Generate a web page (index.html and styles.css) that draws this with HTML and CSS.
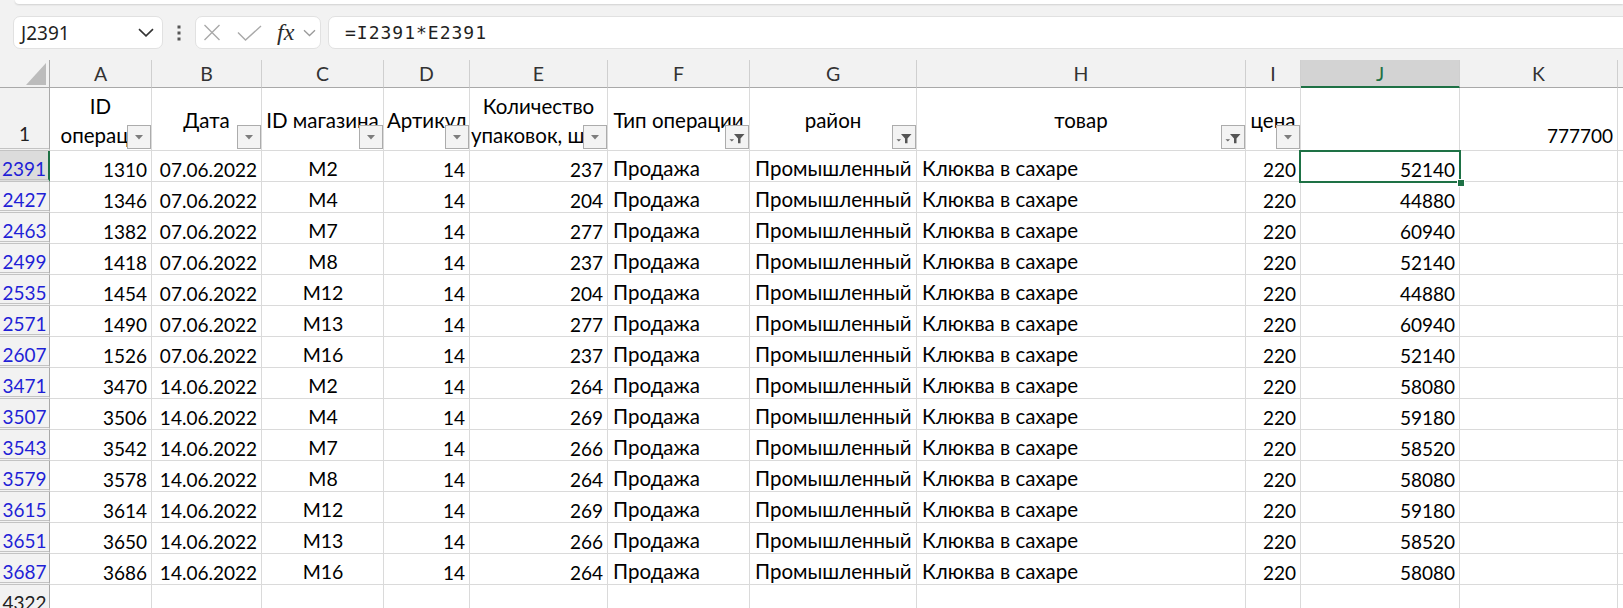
FILE: index.html
```html
<!DOCTYPE html>
<html lang="ru">
<head>
<meta charset="utf-8">
<title>Excel</title>
<link rel="stylesheet" href="styles.css">
</head>
<body>
<div class="top">
  <div class="ribbon-edge"></div>
  <div class="fbar">
    <div class="namebox">
      <span>J2391</span>
      <svg width="16" height="9" viewBox="0 0 16 9"><path d="M1 1.2l7 6.6 7-6.6" stroke="#333" stroke-width="1.6" fill="none"/></svg>
    </div>
    <div class="vdots">
      <svg width="4" height="16" viewBox="0 0 4 16"><rect x="0.5" y="0.5" width="3" height="3" fill="#555"/><rect x="0.5" y="6.5" width="3" height="3" fill="#555"/><rect x="0.5" y="12.5" width="3" height="3" fill="#555"/></svg>
    </div>
    <div class="fxbox">
      <svg class="ic-x" width="18" height="17" viewBox="0 0 18 17"><path d="M1.5 1l15 15M16.5 1l-15 15" stroke="#a9a9a9" stroke-width="1.4" fill="none"/></svg>
      <svg class="ic-ok" width="25" height="16" viewBox="0 0 25 16"><path d="M1 7.5l7.5 7.5L24 1" stroke="#a9a9a9" stroke-width="1.4" fill="none"/></svg>
      <span class="fx">fx</span>
      <svg class="ic-dd" width="13" height="8" viewBox="0 0 13 8"><path d="M1 1.2l5.5 5.3 5.5-5.3" stroke="#9a9a9a" stroke-width="1.3" fill="none"/></svg>
    </div>
    <div class="formula">=I2391*E2391</div>
  </div>
</div>

<div class="sheet">
  <!-- column headers -->
  <div class="corner"><svg width="20" height="22" viewBox="0 0 20 22"><path d="M20 0V22H0z" fill="#bcbcbc"/></svg></div>
  <div class="ch">A</div>
  <div class="ch">B</div>
  <div class="ch">C</div>
  <div class="ch">D</div>
  <div class="ch">E</div>
  <div class="ch">F</div>
  <div class="ch">G</div>
  <div class="ch">H</div>
  <div class="ch">I</div>
  <div class="ch sel">J</div>
  <div class="ch">K</div>
  <div class="ch"></div>

  <!-- row 1 -->
  <div class="rh plain one">1</div>
  <div class="hd"><div class="ln">ID</div><div class="ln">операци</div><span class="fb"><svg width="8" height="5" viewBox="0 0 8 5"><path d="M0 0h8L4 4.5z" fill="#7d7d7d"/></svg></span></div>
  <div class="hd"><div class="ln">Дата</div><span class="fb"><svg width="8" height="5" viewBox="0 0 8 5"><path d="M0 0h8L4 4.5z" fill="#7d7d7d"/></svg></span></div>
  <div class="hd"><div class="ln">ID магазина</div><span class="fb"><svg width="8" height="5" viewBox="0 0 8 5"><path d="M0 0h8L4 4.5z" fill="#7d7d7d"/></svg></span></div>
  <div class="hd"><div class="ln">Артикул</div><span class="fb"><svg width="8" height="5" viewBox="0 0 8 5"><path d="M0 0h8L4 4.5z" fill="#7d7d7d"/></svg></span></div>
  <div class="hd"><div class="ln">Количество</div><div class="ln left">упаковок, шт</div><span class="fb"><svg width="8" height="5" viewBox="0 0 8 5"><path d="M0 0h8L4 4.5z" fill="#7d7d7d"/></svg></span></div>
  <div class="hd"><div class="ln">Тип операции</div><span class="fb"><svg width="22" height="22" viewBox="0 0 22 22"><path d="M3.5 13.2h4.6l-2.3 2.4z" fill="#666"/><path d="M8 8h10.5l-4 4.4v4.8h-2.5v-4.8z" fill="#555"/></svg></span></div>
  <div class="hd"><div class="ln">район</div><span class="fb"><svg width="22" height="22" viewBox="0 0 22 22"><path d="M3.5 13.2h4.6l-2.3 2.4z" fill="#666"/><path d="M8 8h10.5l-4 4.4v4.8h-2.5v-4.8z" fill="#555"/></svg></span></div>
  <div class="hd"><div class="ln">товар</div><span class="fb"><svg width="22" height="22" viewBox="0 0 22 22"><path d="M3.5 13.2h4.6l-2.3 2.4z" fill="#666"/><path d="M8 8h10.5l-4 4.4v4.8h-2.5v-4.8z" fill="#555"/></svg></span></div>
  <div class="hd"><div class="ln">цена</div><span class="fb"><svg width="8" height="5" viewBox="0 0 8 5"><path d="M0 0h8L4 4.5z" fill="#7d7d7d"/></svg></span></div>
  <div class="hd"></div>
  <div class="c r bottom">777700</div>
  <div class="c"></div>

  <!-- data rows -->
  <div class="rh sel">2391</div><div class="c r">1310</div><div class="c r">07.06.2022</div><div class="c m">M2</div><div class="c r">14</div><div class="c r">237</div><div class="c">Продажа</div><div class="c">Промышленный</div><div class="c">Клюква в сахаре</div><div class="c r">220</div><div class="c r active">52140<span class="selbox"><span class="handle"></span></span></div><div class="c"></div><div class="c"></div>
  <div class="rh">2427</div><div class="c r">1346</div><div class="c r">07.06.2022</div><div class="c m">M4</div><div class="c r">14</div><div class="c r">204</div><div class="c">Продажа</div><div class="c">Промышленный</div><div class="c">Клюква в сахаре</div><div class="c r">220</div><div class="c r">44880</div><div class="c"></div><div class="c"></div>
  <div class="rh">2463</div><div class="c r">1382</div><div class="c r">07.06.2022</div><div class="c m">M7</div><div class="c r">14</div><div class="c r">277</div><div class="c">Продажа</div><div class="c">Промышленный</div><div class="c">Клюква в сахаре</div><div class="c r">220</div><div class="c r">60940</div><div class="c"></div><div class="c"></div>
  <div class="rh">2499</div><div class="c r">1418</div><div class="c r">07.06.2022</div><div class="c m">M8</div><div class="c r">14</div><div class="c r">237</div><div class="c">Продажа</div><div class="c">Промышленный</div><div class="c">Клюква в сахаре</div><div class="c r">220</div><div class="c r">52140</div><div class="c"></div><div class="c"></div>
  <div class="rh">2535</div><div class="c r">1454</div><div class="c r">07.06.2022</div><div class="c m">M12</div><div class="c r">14</div><div class="c r">204</div><div class="c">Продажа</div><div class="c">Промышленный</div><div class="c">Клюква в сахаре</div><div class="c r">220</div><div class="c r">44880</div><div class="c"></div><div class="c"></div>
  <div class="rh">2571</div><div class="c r">1490</div><div class="c r">07.06.2022</div><div class="c m">M13</div><div class="c r">14</div><div class="c r">277</div><div class="c">Продажа</div><div class="c">Промышленный</div><div class="c">Клюква в сахаре</div><div class="c r">220</div><div class="c r">60940</div><div class="c"></div><div class="c"></div>
  <div class="rh">2607</div><div class="c r">1526</div><div class="c r">07.06.2022</div><div class="c m">M16</div><div class="c r">14</div><div class="c r">237</div><div class="c">Продажа</div><div class="c">Промышленный</div><div class="c">Клюква в сахаре</div><div class="c r">220</div><div class="c r">52140</div><div class="c"></div><div class="c"></div>
  <div class="rh">3471</div><div class="c r">3470</div><div class="c r">14.06.2022</div><div class="c m">M2</div><div class="c r">14</div><div class="c r">264</div><div class="c">Продажа</div><div class="c">Промышленный</div><div class="c">Клюква в сахаре</div><div class="c r">220</div><div class="c r">58080</div><div class="c"></div><div class="c"></div>
  <div class="rh">3507</div><div class="c r">3506</div><div class="c r">14.06.2022</div><div class="c m">M4</div><div class="c r">14</div><div class="c r">269</div><div class="c">Продажа</div><div class="c">Промышленный</div><div class="c">Клюква в сахаре</div><div class="c r">220</div><div class="c r">59180</div><div class="c"></div><div class="c"></div>
  <div class="rh">3543</div><div class="c r">3542</div><div class="c r">14.06.2022</div><div class="c m">M7</div><div class="c r">14</div><div class="c r">266</div><div class="c">Продажа</div><div class="c">Промышленный</div><div class="c">Клюква в сахаре</div><div class="c r">220</div><div class="c r">58520</div><div class="c"></div><div class="c"></div>
  <div class="rh">3579</div><div class="c r">3578</div><div class="c r">14.06.2022</div><div class="c m">M8</div><div class="c r">14</div><div class="c r">264</div><div class="c">Продажа</div><div class="c">Промышленный</div><div class="c">Клюква в сахаре</div><div class="c r">220</div><div class="c r">58080</div><div class="c"></div><div class="c"></div>
  <div class="rh">3615</div><div class="c r">3614</div><div class="c r">14.06.2022</div><div class="c m">M12</div><div class="c r">14</div><div class="c r">269</div><div class="c">Продажа</div><div class="c">Промышленный</div><div class="c">Клюква в сахаре</div><div class="c r">220</div><div class="c r">59180</div><div class="c"></div><div class="c"></div>
  <div class="rh">3651</div><div class="c r">3650</div><div class="c r">14.06.2022</div><div class="c m">M13</div><div class="c r">14</div><div class="c r">266</div><div class="c">Продажа</div><div class="c">Промышленный</div><div class="c">Клюква в сахаре</div><div class="c r">220</div><div class="c r">58520</div><div class="c"></div><div class="c"></div>
  <div class="rh">3687</div><div class="c r">3686</div><div class="c r">14.06.2022</div><div class="c m">M16</div><div class="c r">14</div><div class="c r">264</div><div class="c">Продажа</div><div class="c">Промышленный</div><div class="c">Клюква в сахаре</div><div class="c r">220</div><div class="c r">58080</div><div class="c"></div><div class="c"></div>
  <div class="rh plain">4322</div><div class="c"></div><div class="c"></div><div class="c"></div><div class="c"></div><div class="c"></div><div class="c"></div><div class="c"></div><div class="c"></div><div class="c"></div><div class="c"></div><div class="c"></div><div class="c"></div>
</div>
</body>
</html>
```

FILE: styles.css
```css
* { box-sizing: border-box; }

html, body { margin: 0; padding: 0; }

body {
  width: 1623px;
  height: 608px;
  overflow: hidden;
  background: #ffffff;
  font-family: Lato, "Open Sans", sans-serif;
  color: #000;
}

/* ---------- formula bar ---------- */
.top {
  height: 60px;
  background: #f2f2f2;
  overflow: hidden;
}

.ribbon-edge {
  height: 4px;
  margin-left: 15px;
  background: #ffffff;
  border-bottom-left-radius: 8px;
  box-shadow: 0 1px 2px rgba(0, 0, 0, 0.14);
}

.fbar {
  display: flex;
  align-items: center;
  padding: 12px 0 0 13px;
}

.namebox {
  width: 150px;
  height: 33px;
  background: #fff;
  border: 1px solid #e1e1e1;
  border-radius: 7px;
  display: flex;
  align-items: center;
  justify-content: space-between;
  padding: 0 8px 0 7px;
  font-family: "Noto Sans", sans-serif;
  font-size: 19px;
  color: #1f1f1f;
}

.vdots {
  width: 32px;
  display: flex;
  justify-content: center;
  align-items: center;
}

.vdots svg { display: block; }

.fxbox {
  width: 126px;
  height: 33px;
  background: #fff;
  border: 1px solid #e1e1e1;
  border-radius: 7px;
  display: flex;
  align-items: center;
  padding-left: 7px;
}

.ic-x { display: block; margin-right: 16px; }
.ic-ok { display: block; margin-right: 15px; }

.fx {
  font-family: "Liberation Serif", serif;
  font-style: italic;
  font-size: 24px;
  line-height: 24px;
  color: #2b2b2b;
  margin-right: 9px;
  margin-top: -2px;
}

.ic-dd { display: block; }

.formula {
  flex: 1;
  margin-left: 7px;
  margin-right: -12px;
  height: 33px;
  background: #fff;
  border: 1px solid #e1e1e1;
  border-radius: 7px;
  padding-left: 16px;
  display: flex;
  align-items: center;
  font-family: "DejaVu Sans Mono", monospace;
  font-size: 18px;
  letter-spacing: 1px;
  color: #1f1f1f;
}

/* ---------- sheet ---------- */
.sheet {
  display: grid;
  grid-template-columns: 50px 102px 110px 122px 86px 138px 142px 167px 329px 55px 159px 158px 60px;
  grid-template-rows: 28px 63px repeat(15, 31px);
  font-size: 20.5px;
}

.corner {
  background: #f2f2f2;
  border-right: 1px solid #a9a9a9;
  border-bottom: 1px solid #a9a9a9;
  display: flex;
  justify-content: flex-end;
  align-items: flex-end;
  padding: 0 3px 2px 0;
}

.corner svg { display: block; }

.ch {
  background: #f2f2f2;
  border-right: 1px solid #cfcfcf;
  border-bottom: 1px solid #a9a9a9;
  text-align: center;
  line-height: 27px;
  font-size: 19.5px;
  color: #333;
}

.ch.sel {
  background: #d3d3d3;
  color: #1e7145;
  border-bottom: 2px solid #1e7145;
}

.rh {
  background: #f2f2f2;
  border-right: 1px solid #a9a9a9;
  border-bottom: 3px double #c3c3c3;
  text-align: center;
  padding-top: 4px;
  line-height: 27px;
  font-size: 19px;
  color: #1f1fd6;
  overflow: hidden;
}

.rh.plain { color: #222; }

.rh.one {
  display: flex;
  align-items: flex-end;
  justify-content: center;
  padding-top: 0;
  padding-bottom: 1px;
}

.rh.sel {
  background: #dcdcdc;
  border-right: 2px solid #1e7145;
}

.c {
  border-right: 1px solid #dadada;
  border-bottom: 1px solid #dadada;
  padding: 4px 4px 0 5px;
  line-height: 27px;
  white-space: nowrap;
  overflow: hidden;
}

.c.r {
  text-align: right;
  font-size: 19px;
  padding-top: 5px;
}

.c.m {
  text-align: center;
  font-size: 19.5px;
}

.c.bottom {
  display: flex;
  align-items: flex-end;
  justify-content: flex-end;
  padding: 0 4px 1px 0;
}

.c.active {
  position: relative;
  overflow: visible;
}

.selbox {
  position: absolute;
  left: -2px;
  top: -1px;
  right: -2px;
  bottom: -2px;
  border: 2px solid #1e7145;
  z-index: 2;
}

.handle {
  position: absolute;
  right: -6px;
  bottom: -6px;
  width: 8px;
  height: 8px;
  background: #1e7145;
  border: 1px solid #fff;
}

/* header row with filters */
.hd {
  position: relative;
  border-right: 1px solid #dadada;
  border-bottom: 1px solid #dadada;
  display: flex;
  flex-direction: column;
  justify-content: center;
  padding-top: 3px;
  line-height: 29px;
  overflow: hidden;
}

.ln {
  white-space: nowrap;
  text-align: center;
  padding: 0 3px;
  overflow: hidden;
}

.ln.left {
  text-align: left;
  padding: 0 0 0 1px;
}

.fb {
  position: absolute;
  right: 0;
  bottom: 1px;
  width: 24px;
  height: 24px;
  border: 1px solid #acacac;
  background: #f3f3f3;
  display: flex;
  align-items: center;
  justify-content: center;
}

.fb svg { display: block; }
```
